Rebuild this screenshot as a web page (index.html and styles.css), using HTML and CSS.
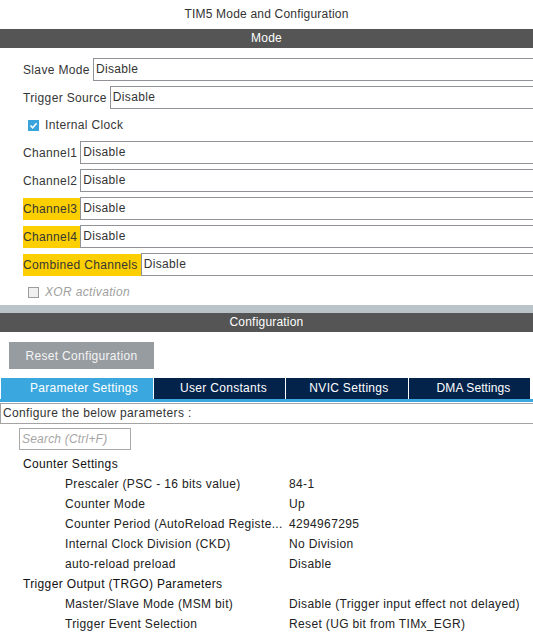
FILE: index.html
```html
<!DOCTYPE html>
<html lang="en">
<head>
    <meta charset="UTF-8">
    <title>TIM5 Mode and Configuration</title>
    <link rel="stylesheet" href="styles.css">
</head>
<body>
    <div class="title">TIM5 Mode and Configuration</div>
    <div class="bar">Mode</div>

    <div class="mode">
        <div class="row"><span class="label">Slave Mode</span><div class="select">Disable</div></div>
        <div class="row"><span class="label">Trigger Source</span><div class="select">Disable</div></div>
        <div class="row check-row">
            <span class="box checked">
                <svg width="11" height="11" viewBox="0 0 11 11"><path d="M2.5 5.5 L4.6 7.8 L8.6 3.2" fill="none" stroke="#fff" stroke-width="1.6"/></svg>
            </span>
            <span>Internal Clock</span>
        </div>
        <div class="row"><span class="label">Channel1</span><div class="select">Disable</div></div>
        <div class="row"><span class="label">Channel2</span><div class="select">Disable</div></div>
        <div class="row"><span class="label warn">Channel3</span><div class="select">Disable</div></div>
        <div class="row"><span class="label warn">Channel4</span><div class="select">Disable</div></div>
        <div class="row"><span class="label warn">Combined Channels</span><div class="select">Disable</div></div>
        <div class="row check-row disabled">
            <span class="box"></span>
            <span>XOR activation</span>
        </div>
    </div>

    <div class="band"></div>
    <div class="bar">Configuration</div>

    <div class="config">
        <button class="reset">Reset Configuration</button>
        <div class="tabs">
            <div class="tab active">Parameter Settings</div>
            <div class="tab">User Constants</div>
            <div class="tab">NVIC Settings</div>
            <div class="tab">DMA Settings</div>
        </div>
        <div class="hint">Configure the below parameters :</div>
        <div class="search">Search (Ctrl+F)</div>

        <div class="params">
            <div class="group">Counter Settings</div>
            <div class="param"><span class="name">Prescaler (PSC - 16 bits value)</span><span>84-1</span></div>
            <div class="param"><span class="name">Counter Mode</span><span>Up</span></div>
            <div class="param"><span class="name">Counter Period (AutoReload Registe...</span><span>4294967295</span></div>
            <div class="param"><span class="name">Internal Clock Division (CKD)</span><span>No Division</span></div>
            <div class="param"><span class="name">auto-reload preload</span><span>Disable</span></div>
            <div class="group">Trigger Output (TRGO) Parameters</div>
            <div class="param"><span class="name">Master/Slave Mode (MSM bit)</span><span>Disable (Trigger input effect not delayed)</span></div>
            <div class="param"><span class="name">Trigger Event Selection</span><span>Reset (UG bit from TIMx_EGR)</span></div>
        </div>
    </div>
</body>
</html>
```

FILE: styles.css
```css
body {
    margin: 0;
    font-family: "Liberation Sans", Arial, sans-serif;
    font-size: 12px;
    letter-spacing: 0.35px;
    color: #363636;
    background: #fff;
    overflow: hidden;
}
.title {
    height: 29px;
    line-height: 29px;
    text-align: center;
    letter-spacing: 0.2px;
    color: #333;
}
.bar {
    height: 19px;
    line-height: 19px;
    background-color: #545554;
    color: #fff;
    text-align: center;
    letter-spacing: 0.2px;
}
.mode {
    padding: 10px 0 1px 23px;
}
.row {
    display: flex;
    align-items: center;
    height: 23px;
    margin-bottom: 5px;
}
.label {
    height: 22px;
    line-height: 22px;
    padding-right: 3px;
    white-space: nowrap;
}
.label.warn {
    background-color: #fdcf00;
}
.select {
    flex: 1;
    box-sizing: border-box;
    height: 23px;
    line-height: 21px;
    margin-right: -10px;
    padding-left: 2px;
    border: 1px solid #8f9397;
    color: #333;
}
.check-row {
    height: 22px;
    padding-left: 5px;
}
.check-row:last-child {
    margin-bottom: 0;
}
.box {
    box-sizing: border-box;
    width: 11px;
    height: 11px;
    margin-right: 6px;
    border: 1px solid #9c9c9c;
    background: #f0f0f0;
}
.box svg {
    display: block;
    margin: -1px;
}
.box.checked {
    border: none;
    background: #3ba3dc;
}
.box.checked svg {
    margin: 0;
}
.disabled {
    color: #a0a0a0;
    font-style: italic;
}
.band {
    height: 8px;
    margin-top: 1px;
    background-color: #b9c3c8;
}
.config {
    padding-top: 10px;
}
.reset {
    display: block;
    width: 145px;
    height: 27px;
    margin-left: 9px;
    padding: 0;
    border: none;
    background-color: #979ca1;
    color: #f4f4f4;
    font-family: inherit;
    font-size: 12px;
    letter-spacing: 0.3px;
}
.tabs {
    display: flex;
    margin-top: 9px;
    padding-left: 1px;
    border-bottom: 3px solid #3aa8de;
}
.tab {
    height: 21px;
    line-height: 21px;
    margin-right: 1px;
    padding-left: 8px;
    box-sizing: border-box;
    text-align: center;
    background-color: #03234b;
    color: #fff;
    letter-spacing: 0.3px;
}
.tab:nth-child(1) { width: 152px; padding-left: 14px; background-color: #3aa8de; }
.tab:nth-child(2) { width: 131px; }
.tab:nth-child(3) { width: 122px; padding-left: 4px; }
.tab:nth-child(4) { width: 121px; letter-spacing: 0.1px; }
.hint {
    height: 19px;
    line-height: 19px;
    margin-top: 1px;
    padding-left: 2px;
    border: 1px solid #a3a3a3;
    border-right: none;
    color: #333;
}
.search {
    box-sizing: border-box;
    width: 112px;
    height: 22px;
    line-height: 20px;
    margin: 4px 0 4px 19px;
    padding-left: 2px;
    border: 1px solid #a8a8a8;
    color: #a6a6a6;
    font-style: italic;
    letter-spacing: 0.2px;
}
.params {
    color: #222;
}
.group {
    height: 20px;
    line-height: 20px;
    padding-left: 23px;
    color: #111;
}
.param {
    display: flex;
    height: 20px;
    line-height: 20px;
    padding-left: 65px;
    white-space: nowrap;
}
.name {
    width: 224px;
    flex-shrink: 0;
}
```
